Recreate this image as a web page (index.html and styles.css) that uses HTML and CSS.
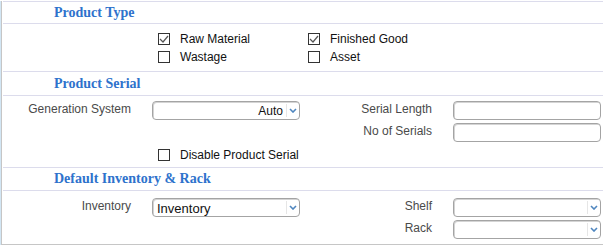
FILE: index.html
```html
<!DOCTYPE html>
<html lang="en">
<head>
  <meta charset="UTF-8">
  <title>Product Settings</title>
  <link rel="stylesheet" href="styles.css">
</head>
<body>
  <div class="frame">
    <div class="panel">

      <div class="section first">
        <div class="section-head">Product Type</div>
        <div class="checks">
          <label class="check"><span class="box"><svg viewBox="0 0 12 12" width="12" height="12"><path d="M2 6 L5 9 L10 3" fill="none" stroke="#555" stroke-width="1.2"/></svg></span>Raw Material</label>
          <label class="check"><span class="box"><svg viewBox="0 0 12 12" width="12" height="12"><path d="M2 6 L5 9 L10 3" fill="none" stroke="#555" stroke-width="1.2"/></svg></span>Finished Good</label>
          <label class="check"><span class="box"></span>Wastage</label>
          <label class="check"><span class="box"></span>Asset</label>
        </div>
      </div>

      <div class="section tall">
        <div class="section-head">Product Serial</div>
        <div class="form serial">
          <div class="label">Generation System</div>
          <div class="select right"><span class="value">Auto</span><span class="arrow"><svg viewBox="0 0 8 5" width="8" height="5"><path d="M1 1 L4 4 L7 1" fill="none" stroke="#4f86bf" stroke-width="1.6"/></svg></span></div>
          <div class="label">Serial Length</div>
          <div class="input"></div>

          <div class="label"></div>
          <div></div>
          <div class="label">No of Serials</div>
          <div class="input"></div>

          <div class="label"></div>
          <label class="check"><span class="box"></span>Disable Product Serial</label>
        </div>
      </div>

      <div class="section">
        <div class="section-head">Default Inventory &amp; Rack</div>
        <div class="form inventory">
          <div class="label">Inventory</div>
          <div class="select"><span class="value dark">Inventory</span><span class="arrow"><svg viewBox="0 0 8 5" width="8" height="5"><path d="M1 1 L4 4 L7 1" fill="none" stroke="#4f86bf" stroke-width="1.6"/></svg></span></div>
          <div class="label">Shelf</div>
          <div class="select"><span class="value"></span><span class="arrow"><svg viewBox="0 0 8 5" width="8" height="5"><path d="M1 1 L4 4 L7 1" fill="none" stroke="#4f86bf" stroke-width="1.6"/></svg></span></div>

          <div class="label"></div>
          <div></div>
          <div class="label">Rack</div>
          <div class="select"><span class="value"></span><span class="arrow"><svg viewBox="0 0 8 5" width="8" height="5"><path d="M1 1 L4 4 L7 1" fill="none" stroke="#4f86bf" stroke-width="1.6"/></svg></span></div>
        </div>
      </div>

    </div>
  </div>
</body>
</html>
```

FILE: styles.css
```css
body {
  margin: 0;
  padding: 0;
  background-color: #fff;
  font-family: "Liberation Sans", Arial, sans-serif;
  font-size: 12px;
  color: #111;
}
.frame {
  border-left: 1px solid #d2e6f4;
  width: 602px;
}
.panel {
  border-left: 1px solid #c6c6c6;
  border-bottom: 2px solid #c6c6c6;
  padding-left: 1px;
}
.section {
  border-top: 1px solid #dcdcec;
}
.section.first {
  margin-top: 1px;
}
.section-head {
  height: 22px;
  line-height: 22px;
  padding-left: 51px;
  border-bottom: 1px solid #dcdcec;
  font-family: "Liberation Serif", "Times New Roman", serif;
  font-weight: bold;
  font-size: 14px;
  color: #2e72cc;
}
.section.first .section-head {
  height: 21px;
  line-height: 21px;
}
.section.tall .section-head {
  height: 23px;
  line-height: 24px;
}
.checks {
  display: grid;
  grid-template-columns: 150px 170px;
  grid-auto-rows: 18px;
  padding: 6px 0 5px 155px;
}
.check {
  display: flex;
  align-items: center;
  color: #111;
}
.box {
  width: 10px;
  height: 10px;
  border: 1px solid #333;
  margin-right: 10px;
  display: flex;
  align-items: center;
  justify-content: center;
  background: #fff;
}
.box svg {
  flex: none;
}
.form {
  display: grid;
  grid-template-columns: 149px 148px 153px 148px;
  grid-auto-rows: 19px;
  row-gap: 3px;
}
.form.serial {
  padding: 5px 0 3px;
}
.form.inventory {
  padding: 7px 0 5px;
}
.form .check {
  padding-left: 6px;
}
.label {
  text-align: right;
  padding-right: 21px;
  color: #4a4a4a;
  line-height: 17px;
}
.input,
.select {
  border: 1px solid #a4a4a4;
  border-radius: 4px;
  box-shadow: inset 1px 1px 0 #d4d4d4;
  background: #fff;
}
.select {
  display: flex;
  align-items: stretch;
}
.select .value {
  flex: 1;
  line-height: 19px;
  padding: 0 4px;
  color: #111;
}
.select.right .value {
  text-align: right;
  padding-right: 3px;
}
.select .value.dark {
  font-size: 13px;
}
.select .arrow {
  width: 12px;
  margin: 2px 0;
  border-left: 1px solid #e6e6e6;
  display: flex;
  align-items: center;
  justify-content: center;
}
```
